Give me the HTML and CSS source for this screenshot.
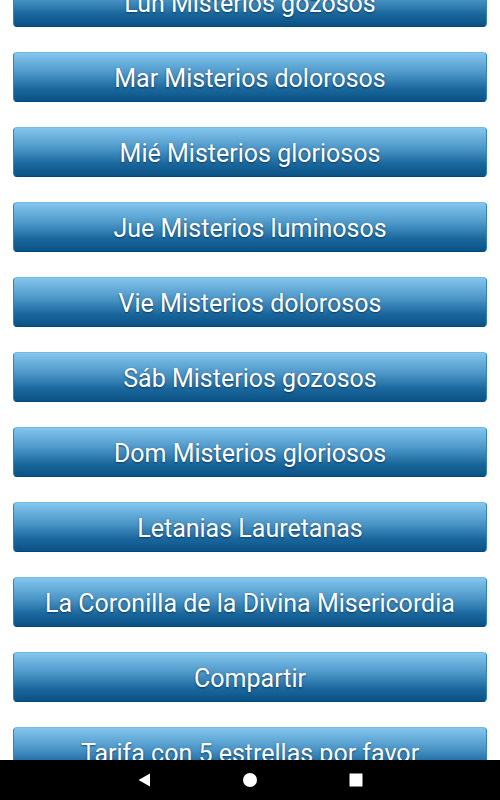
FILE: index.html
```html
<!DOCTYPE html>
<html lang="es">
  <head>
    <meta charset="UTF-8" />
    <meta name="viewport" content="width=device-width, initial-scale=1.0" />
    <title>Santo Rosario</title>
    <link rel="stylesheet" href="styles.css">
  </head>
  <body>
    <div class="menu">
      <button class="menu-btn">Lun Misterios gozosos</button>
      <button class="menu-btn">Mar Misterios dolorosos</button>
      <button class="menu-btn">Mié Misterios gloriosos</button>
      <button class="menu-btn">Jue Misterios luminosos</button>
      <button class="menu-btn">Vie Misterios dolorosos</button>
      <button class="menu-btn">Sáb Misterios gozosos</button>
      <button class="menu-btn">Dom Misterios gloriosos</button>
      <button class="menu-btn">Letanias Lauretanas</button>
      <button class="menu-btn">La Coronilla de la Divina Misericordia</button>
      <button class="menu-btn">Compartir</button>
      <button class="menu-btn">Tarifa con 5 estrellas por favor</button>
    </div>

    <div class="navbar">
      <svg class="nav-icon" width="14" height="14" viewBox="0 0 14 14">
        <polygon points="13,0.5 13,13.5 1.5,7" fill="#fff" />
      </svg>
      <svg class="nav-icon" width="14" height="14" viewBox="0 0 14 14">
        <circle cx="7" cy="7" r="7" fill="#fff" />
      </svg>
      <svg class="nav-icon" width="14" height="14" viewBox="0 0 14 14">
        <rect x="0.5" y="0.5" width="13" height="13" fill="#fff" />
      </svg>
    </div>
  </body>
</html>
```

FILE: styles.css
```css
* {
  margin: 0;
  box-sizing: border-box;
}
body {
  background-color: white;
  font-family: Roboto, "Noto Sans", sans-serif;
  height: 800px;
  overflow: hidden;
}
.menu {
  display: flex;
  flex-direction: column;
  gap: 25px;
  padding: 0 13px;
  margin-top: -23px;
}
.menu-btn {
  height: 50px;
  width: 100%;
  border: 1px solid #2f86bf;
  border-top-color: #6fbbe6;
  border-bottom-color: #05467a;
  border-radius: 4px;
  background: linear-gradient(to bottom, #84c6ee 0%, #4893c5 45%, #1a679d 75%, #0a5285 100%);
  color: white;
  font-family: Roboto, "Noto Sans", sans-serif;
  font-size: 25px;
  text-shadow: 0 1px 2px rgba(0, 35, 70, 0.7);
  padding: 2px 0 0;
  white-space: nowrap;
}
.navbar {
  position: fixed;
  left: 0;
  right: 0;
  bottom: 0;
  height: 40px;
  background-color: black;
  display: flex;
  justify-content: center;
  align-items: center;
  gap: 92px;
}
```
